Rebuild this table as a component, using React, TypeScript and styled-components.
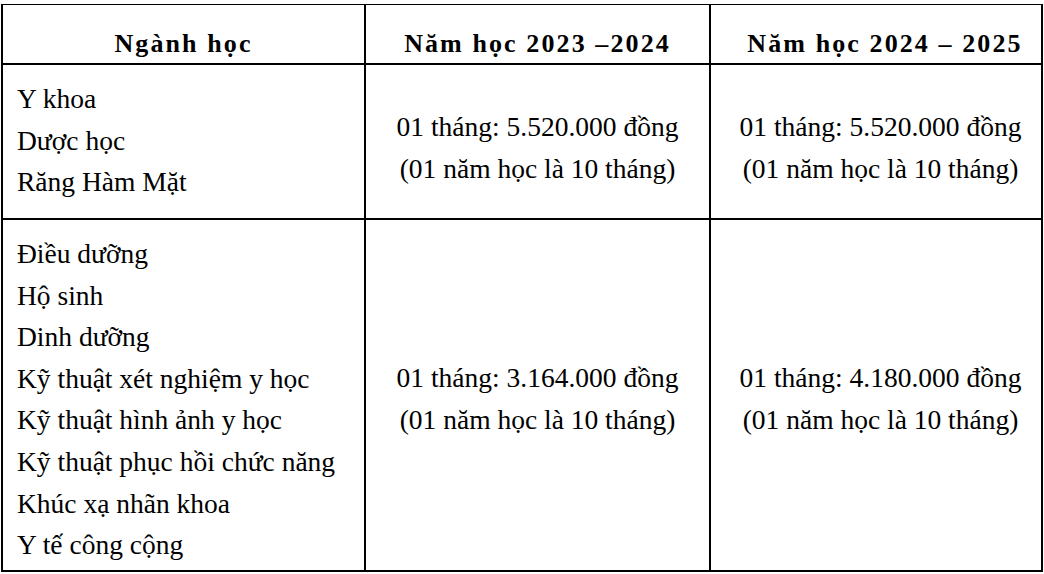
import React from "react";
import styled, { createGlobalStyle } from "styled-components";

const Global = createGlobalStyle`
  html, body { margin: 0; padding: 0; background: #ffffff; }
  body { font-family: "Liberation Serif", "Times New Roman", serif; color: #000; }
`;

const Page = styled.div`
  width: 1044px;
  height: 574px;
  padding: 4px 0 0 1px;
  box-sizing: border-box;
`;

const Table = styled.div`
  display: grid;
  grid-template-columns: 363px 345px 332px;
  grid-template-rows: 60px 155px 352px;
  border-top: 1.5px solid #000;
  border-left: 2px solid #000;
  width: max-content;
`;

const Cell = styled.div<{ $align?: "left" | "center"; $head?: boolean; $shift?: number; $padLeft?: number }>`
  border-right: 2px solid #000;
  border-bottom: 2px solid #000;
  box-sizing: border-box;
  display: flex;
  flex-direction: column;
  justify-content: ${(p) => (p.$head ? "flex-end" : p.$align === "left" ? "flex-start" : "center")};
  align-items: ${(p) => (p.$align === "left" ? "flex-start" : "center")};
  padding-left: ${(p) => (p.$align === "left" ? 14 : p.$padLeft ?? 0)}px;
  padding-top: ${(p) => p.$shift ?? 0}px;
  padding-bottom: ${(p) => (p.$head ? 4 : 0)}px;
  font-size: ${(p) => (p.$head ? 26 : 27.5)}px;
  line-height: ${(p) => (p.$head ? "30px" : "41.6px")};
  font-weight: ${(p) => (p.$head ? 700 : 400)};
  letter-spacing: ${(p) => (p.$head ? "2.1px" : "0")};
  white-space: nowrap;
`;

const Line = styled.div``;

const group1 = ["Y khoa", "Dược học", "Răng Hàm Mặt"];
const group2 = [
  "Điều dưỡng",
  "Hộ sinh",
  "Dinh dưỡng",
  "Kỹ thuật xét nghiệm y học",
  "Kỹ thuật hình ảnh y học",
  "Kỹ thuật phục hồi chức năng",
  "Khúc xạ nhãn khoa",
  "Y tế công cộng",
];

const Fee = ({ amount }: { amount: string }) => (
  <>
    <Line>01 tháng: {amount} đồng</Line>
    <Line>(01 năm học là 10 tháng)</Line>
  </>
);

export default function App() {
  return (
    <>
      <Global />
      <Page>
        <Table>
          <Cell $head>Ngành học</Cell>
          <Cell $head>Năm học 2023 –2024</Cell>
          <Cell $head $padLeft={18}>Năm học 2024 – 2025</Cell>

          <Cell $align="left" $shift={13}>
            {group1.map((g) => (
              <Line key={g}>{g}</Line>
            ))}
          </Cell>
          <Cell $shift={12}>
            <Fee amount="5.520.000" />
          </Cell>
          <Cell $shift={12} $padLeft={9}>
            <Fee amount="5.520.000" />
          </Cell>

          <Cell $align="left" $shift={13}>
            {group2.map((g) => (
              <Line key={g}>{g}</Line>
            ))}
          </Cell>
          <Cell $shift={8}>
            <Fee amount="3.164.000" />
          </Cell>
          <Cell $shift={8} $padLeft={9}>
            <Fee amount="4.180.000" />
          </Cell>
        </Table>
      </Page>
    </>
  );
}
